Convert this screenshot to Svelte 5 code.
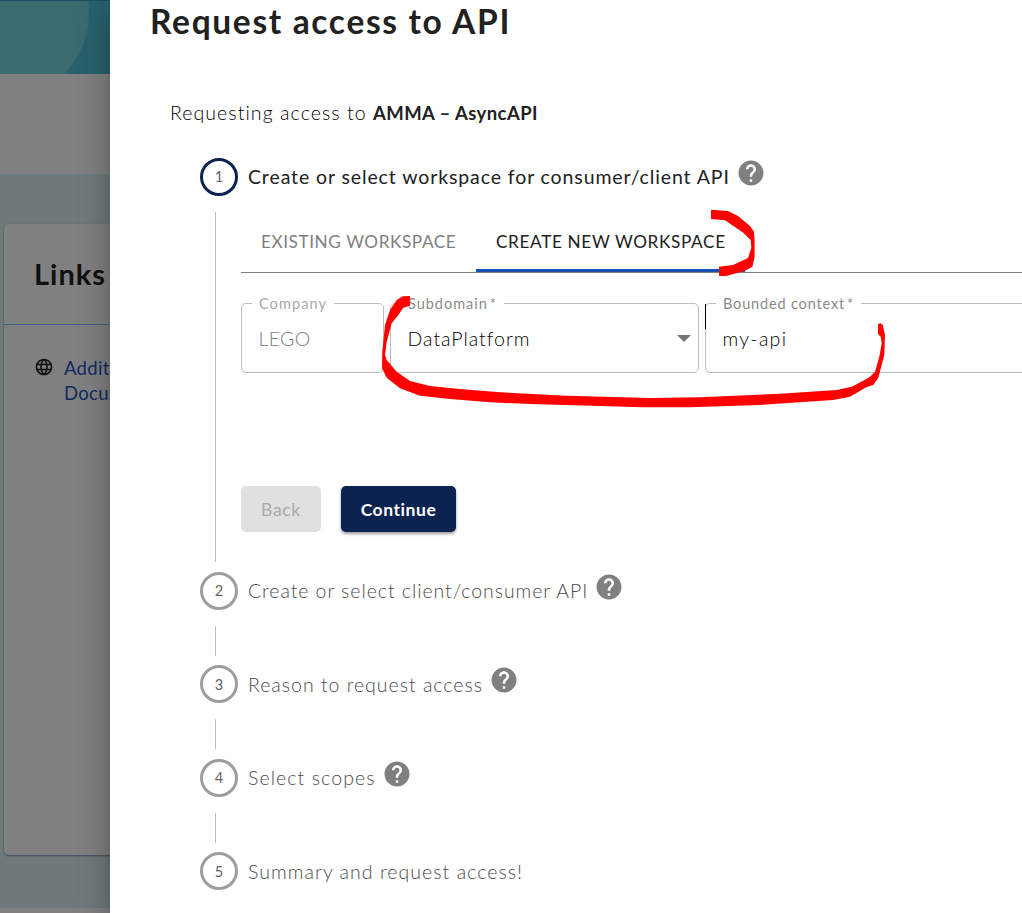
<script>
  const steps = [
    { n: 2, label: 'Create or select client/consumer API', help: true, ls: 0.94 },
    { n: 3, label: 'Reason to request access', help: true, ls: 0.98 },
    { n: 4, label: 'Select scopes', help: true, ls: 1.08 },
    { n: 5, label: 'Summary and request access!', help: false, ls: 1.04 }
  ];
</script>

{#snippet help()}
  <svg class="help" viewBox="0 0 24 24"><path d="M12 2C6.48 2 2 6.48 2 12s4.48 10 10 10 10-4.48 10-10S17.52 2 12 2zm1 17h-2v-2h2v2zm2.07-7.75l-.9.92C13.45 12.9 13 13.5 13 15h-2v-.5c0-1.1.45-2.1 1.17-2.83l1.24-1.26c.37-.36.59-.86.59-1.41 0-1.1-.9-2-2-2s-2 .9-2 2H8c0-2.21 1.79-4 4-4s4 1.79 4 4c0 .88-.36 1.68-.93 2.25z" /></svg>
{/snippet}

<div class="page">
  <div class="backdrop">
    <div class="hero"></div>
    <div class="strip"></div>
    <div class="content">
      <section class="card">
        <h2>Links</h2>
        <div class="link-row">
          <svg class="globe" viewBox="0 0 24 24"><path d="M11.99 2C6.47 2 2 6.48 2 12s4.47 10 9.99 10C17.52 22 22 17.52 22 12S17.52 2 11.99 2zm6.93 6h-2.95c-.32-1.25-.78-2.45-1.38-3.56 1.84.63 3.37 1.91 4.33 3.56zM12 4.04c.83 1.2 1.48 2.53 1.91 3.96h-3.82c.43-1.43 1.08-2.76 1.91-3.96zM4.26 14C4.1 13.36 4 12.69 4 12s.1-1.36.26-2h3.38c-.08.66-.14 1.32-.14 2s.06 1.34.14 2H4.26zm.82 2h2.95c.32 1.25.78 2.45 1.38 3.56-1.84-.63-3.37-1.9-4.33-3.56zm2.95-8H5.08c.96-1.66 2.49-2.93 4.33-3.56C8.81 5.55 8.35 6.75 8.03 8zM12 19.96c-.83-1.2-1.48-2.53-1.91-3.96h3.82c-.43 1.43-1.08 2.76-1.91 3.96zM14.34 14H9.66c-.09-.66-.16-1.32-.16-2s.07-1.35.16-2h4.68c.09.65.16 1.32.16 2s-.07 1.34-.16 2zm.25 5.56c.6-1.11 1.06-2.31 1.38-3.56h2.95c-.96 1.65-2.49 2.93-4.33 3.56zM16.36 14c.08-.66.14-1.32.14-2s-.06-1.34-.14-2h3.38c.16.64.26 1.31.26 2s-.1 1.36-.26 2h-3.38z" /></svg>
          <span class="link">Additional<br />Documentation</span>
        </div>
      </section>
    </div>
    <div class="footer"></div>
  </div>

  <main class="drawer">
    <h1>Request access to API</h1>
    <p class="intro"><span>Requesting access to&nbsp;</span><b>AMMA – AsyncAPI</b></p>

    <div class="stepper">
      <div class="step active">
        <span class="dot">1</span><span>Create or select workspace for consumer/client API</span>{@render help()}
      </div>
      <div class="panel">
        <div class="tabs">
          <div class="tab">EXISTING WORKSPACE</div>
          <div class="tab on">CREATE NEW WORKSPACE</div>
        </div>
        <div class="fields">
          <div class="field company"><span class="lab">Company</span>LEGO</div>
          <div class="field sub"><span class="lab">Subdomain<i>*</i></span>DataPlatform<svg class="caret" viewBox="0 0 14 7"><path d="M0 0h14L7 7z" /></svg></div>
          <div class="field ctx"><span class="cursor"></span><span class="lab">Bounded context<i>*</i></span>my-api</div>
        </div>
        <div class="buttons">
          <button class="back">Back</button>
          <button class="go">Continue</button>
        </div>
      </div>
      {#each steps as s, i}
        {#if i > 0}<div class="connector"></div>{/if}
        <div class="step">
          <span class="dot">{s.n}</span><span style:letter-spacing="{s.ls}px">{s.label}</span>{#if s.help}{@render help()}{/if}
        </div>
      {/each}
    </div>
  </main>

  <svg class="ink" viewBox="0 0 1022 913">
    <path d="M711 209.7L728 211L738 216L750 226L754 231.7L754.6 240V257L752.4 266.7L745 270.7L726 276H719V266.7L733 265L748 258L751.3 248L750.7 240L743.3 232.7L725 220.3L711 219Z" />
    <path d="M410 296L402.7 296.3L396.7 300L390 310L385 325L382.3 351.7L382 368.3L386.7 377.7L400 388.3L420 395.7L450 399L490 402.3L530 404L643 407.3H690L760 405L833 400L850 396.7L866.7 387L873.3 385L878.3 377.7L884.3 355L885 335L882.7 325L880.7 323.3L878 324V334L880.7 336.7L881.7 343.3L879.3 356.7L875 371.7L870 376.7L863.3 380.7L851.7 386.7L836.7 390L780 393.7L700 397.3L650 398L566.7 395.7L500 392.3L460 389L430 386L410 381L396.7 371.7L386.7 360L385 355L386.7 341.7L391.7 323.3L398.3 315L403.3 307.7L410 305.7Z" />
  </svg>
</div>

<style>
  :global(body) { background: #fff; overflow: hidden; }
  .page { position: relative; width: 1022px; height: 913px; overflow: hidden; font-family: Lato, sans-serif; color: #212121; white-space: nowrap; }
  .backdrop { display: flex; flex-direction: column; height: 913px; width: 240px; }
  .hero { height: 74px; box-sizing: border-box; border-top: 1px solid #1f4c60; background: radial-gradient(circle at 2px 12px, #3b6a70 86.5px, #28626d 87.5px); }
  .strip { height: 100px; background: #808080; }
  .content { height: 734px; box-sizing: border-box; background: #70797b; padding: 50px 0 0 4px; }
  .card { height: 631px; border-radius: 5px; background: #808080; box-shadow: 0 1px 2px rgba(30, 40, 60, .6); }
  h2 { margin: 0; height: 101px; box-sizing: border-box; border-bottom: 1px solid #40608f; padding: 30px 0 0 30px; font-size: 29px; line-height: 40px; font-weight: 700; letter-spacing: .99px; color: #111; }
  .link-row { display: flex; gap: 10px; padding: 30px 0 0 30px; }
  .link { color: #102a60; font-size: 18.5px; line-height: 25px; letter-spacing: .3px; padding-top: 1px; }
  .globe { width: 20px; height: 20px; margin-top: 2px; fill: #111; }
  .footer { flex: 1; background: #827f80; }

  .drawer { position: absolute; left: 110px; top: 0; width: 912px; height: 913px; background: #fff; box-shadow: 0 8px 10px -5px rgba(0, 0, 0, .2), 0 16px 24px 2px rgba(0, 0, 0, .14), 0 6px 30px 5px rgba(0, 0, 0, .12); }
  h1 { margin: 0; padding: 2px 0 0 40px; height: 40px; line-height: 39px; font-size: 33.5px; font-weight: 700; letter-spacing: 1.66px; }
  .intro { margin: 56px 0 0 60px; height: 30px; line-height: 30px; font-size: 19.5px; font-weight: 300; letter-spacing: 1.07px; color: #000; display: flex; }
  .intro b { font-size: 18.5px; font-weight: 700; letter-spacing: .4px; color: #212121; }
  .stepper { padding: 30px 0 0 90px; }
  .step { display: flex; align-items: center; height: 37.5px; color: #4c4c4c; font-size: 19.5px; font-weight: 300; }
  .step.active { color: #212121; font-weight: 400; letter-spacing: .89px; }
  .dot { width: 38px; height: 38px; box-sizing: border-box; border: 3px solid #9e9e9e; border-radius: 50%; display: grid; place-items: center; font-size: 14.5px; font-weight: 400; letter-spacing: 0; color: #616161; margin-right: 10px; }
  .active .dot { border-color: #0a2351; }
  .help { width: 30px; height: 30px; margin: -8px 0 0 6px; fill: #808080; }
  .connector { width: 1px; height: 30px; margin: 16px 0 10px 15px; background: #bdbdbd; }
  .panel { margin: 16px 0 10.5px 15px; border-left: 1px solid #bdbdbd; height: 350px; padding-left: 25px; box-sizing: border-box; }
  .tabs { height: 61px; box-sizing: border-box; border-bottom: 1px solid #808080; display: flex; font-size: 17.2px; letter-spacing: .57px; color: #808080; }
  .tab { width: 235px; box-sizing: border-box; padding-left: 20px; line-height: 59px; height: 60px; }
  .tab.on { width: 269px; letter-spacing: .64px; color: #212121; border-bottom: 3px solid #1650b0; }
  .fields { display: flex; gap: 6px; padding-top: 30px; }
  .field { flex: none; position: relative; box-sizing: border-box; height: 70px; border: 1px solid #bdbdbd; border-radius: 5px; padding-left: 16.5px; line-height: 69px; font-size: 19.5px; font-weight: 300; letter-spacing: 1px; color: #000; }
  .company { width: 143px; color: #808080; letter-spacing: .34px; }
  .sub { width: 309px; }
  .ctx { width: 400px; letter-spacing: 1.3px; }
  .lab { position: absolute; left: 10px; top: -10px; height: 20px; line-height: 20px; padding: 0 7px; background: #fff; font-size: 14.5px; font-weight: 400; letter-spacing: .98px; color: #8a8a8a; }
  .company .lab { color: #a9a9a9; letter-spacing: 1.08px; }
  .ctx .lab { letter-spacing: .84px; }
  i { font-style: normal; margin-left: 2px; }
  .caret { position: absolute; right: 7px; top: 31px; width: 14px; height: 7px; fill: #757575; }
  .cursor { position: absolute; left: -1px; top: 0; width: 1px; height: 25px; background: #000; }
  .buttons { display: flex; gap: 20px; padding-top: 113px; }
  button { font: 400 17.5px/48px Lato, sans-serif; height: 46px; border: 0; border-radius: 5px; padding: 0; }
  .back { width: 80px; background: #e0e0e0; color: #aaa; letter-spacing: .7px; }
  .go { width: 115px; background: #0a2351; color: #fff; font-weight: 700; letter-spacing: .55px; box-shadow: 0 2px 3px rgba(0, 0, 0, .4); }
  .ink { position: absolute; inset: 0; width: 1022px; height: 913px; fill: #f00; }
</style>
